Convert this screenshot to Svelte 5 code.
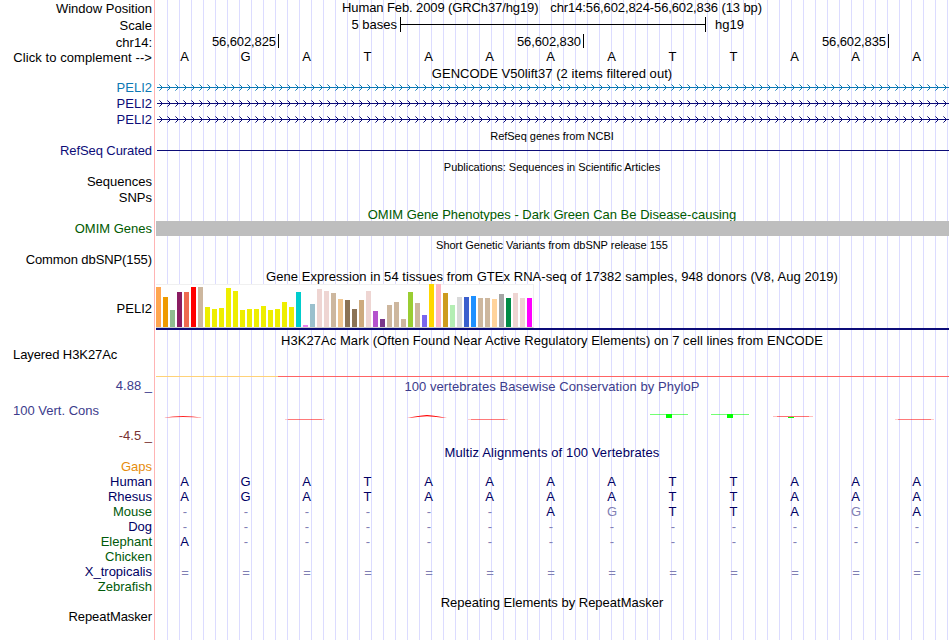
<script>
	const bases = "AGATAAAATTAAA".split("");
	const ticks = ["56,602,825", "56,602,830", "56,602,835"];

	// height is the distance to the next label
	const labels = [
		{ text: "Window Position", h: 17 },
		{ text: "Scale", h: 17 },
		{ text: "chr14:", h: 15 },
		{ text: "Click to complement -->", h: 30, kind: "loose" },
		{ text: "PELI2", h: 16, kind: "blue" },
		{ text: "PELI2", h: 16, kind: "gene" },
		{ text: "PELI2", h: 31, kind: "gene" },
		{ text: "RefSeq Curated", h: 31, kind: "gene tight" },
		{ text: "Sequences", h: 16 },
		{ text: "SNPs", h: 31 },
		{ text: "OMIM Genes", h: 31, kind: "omim" },
		{ text: "Common dbSNP(155)", h: 49, kind: "tight" },
		{ text: "PELI2", h: 46 },
		{ text: "Layered H3K27Ac", h: 31, kind: "left tight" },
		{ text: "4.88 _", h: 25, kind: "cons" },
		{ text: "100 Vert. Cons", h: 25, kind: "left cons" },
		{ text: "-4.5 _", h: 31, kind: "neg" },
		{ text: "Gaps", h: 15, kind: "gaps" },
		{ text: "Human", h: 15, kind: "navy" },
		{ text: "Rhesus", h: 15, kind: "navy" },
		{ text: "Mouse", h: 15, kind: "green" },
		{ text: "Dog", h: 15, kind: "navy" },
		{ text: "Elephant", h: 15, kind: "green" },
		{ text: "Chicken", h: 15, kind: "green" },
		{ text: "X_tropicalis", h: 15, kind: "navy" },
		{ text: "Zebrafish", h: 30, kind: "green" },
		{ text: "RepeatMasker", h: 15, kind: "tight" },
	];

	const alignment = [
		"             ",
		"AGATAAAATTAAA",
		"AGATAAAATTAAA",
		"------AGTTAGA",
		"-------------",
		"A------------",
		"             ",
		"=============",
		"             ",
	];

	const tissues = [
		["#ffa54f", 40], ["#ee9a00", 30], ["#8fbc8f", 17], ["#8b1c62", 35], ["#ee6a50", 35], ["#ff0000", 40],
		["#cdb79e", 40], ["#eeee00", 20], ["#eeee00", 18], ["#eeee00", 19], ["#eeee00", 39], ["#eeee00", 36],
		["#eeee00", 17], ["#eeee00", 18], ["#eeee00", 18], ["#eeee00", 21], ["#eeee00", 17], ["#eeee00", 18],
		["#eeee00", 25], ["#eeee00", 20], ["#00cdcd", 35], ["#ee82ee", 2], ["#9ac0cd", 23], ["#eed5d2", 38],
		["#eed5d2", 36], ["#cdb79e", 34], ["#eec591", 28], ["#8b7355", 27], ["#8b7355", 18], ["#cdaa7d", 27],
		["#eed5d2", 36], ["#b452cd", 16], ["#7a378b", 8], ["#cdb79e", 22], ["#cdb79e", 25], ["#cdb79e", 8],
		["#9acd32", 35], ["#cdb79e", 24], ["#7a67ee", 12], ["#ffd700", 43], ["#ffb6c1", 43], ["#cd9b1d", 34],
		["#b4eeb4", 22], ["#d9d9d9", 30], ["#3a5fcd", 30], ["#1e90ff", 31], ["#cdb79e", 29], ["#cdb79e", 29],
		["#ffd39b", 28], ["#a6a6a6", 33], ["#008b45", 29], ["#eed5d2", 34], ["#eed5d2", 29], ["#ff00ff", 29],
	];

	const genes = ["#0c78b4", "#0c0c78", "#0c0c78"];
	const arrows = Array.from({ length: 99 }, (_, i) => 4 + i * 8);

	const isFaint = (row, i) => row[i] === "-" || row[i] === "=" || (row[i] === "G" && bases[i] !== "G");
</script>

<main>
	<div class="labels">
		{#each labels as label}
			<div class="label {label.kind ?? ''}" style="height: {label.h}px">{label.text}</div>
		{/each}
	</div>

	<div class="tracks">
		<div class="title top"><span>Human Feb. 2009 (GRCh37/hg19)</span><span>chr14:56,602,824-56,602,836 (13 bp)</span></div>
		<div class="scale">
			<span class="size">5 bases</span>
			<span class="ruler"><i></i></span>
			<span>hg19</span>
		</div>
		<div class="positions">
			{#each ticks as tick}
				<span>{tick}</span>
			{/each}
		</div>
		<div class="bases">
			{#each bases as base}
				<span>{base}</span>
			{/each}
		</div>

		<div class="title gencode">GENCODE V50lift37 (2 items filtered out)</div>
		{#each genes as color}
			<svg class="gene" width="792" height="16" viewBox="0 0 792 16" shape-rendering="crispEdges" stroke={color} fill="none">
				<path d="M0 7.5H792" />
				{#each arrows as x}
					<path d="M{x - 1} 5.5h1M{x} 6.5h1M{x} 8.5h1M{x - 1} 9.5h1" />
					<path d="M{x - 2} 4.5h1M{x - 2} 10.5h1" opacity=".6" />
				{/each}
			</svg>
		{/each}

		<div class="title small refseq">RefSeq genes from NCBI</div>
		<div class="curated"></div>
		<div class="title small pubs">Publications: Sequences in Scientific Articles</div>
		<div class="title phenotypes">OMIM Gene Phenotypes - Dark Green Can Be Disease-causing</div>
		<div class="omim-bar"></div>
		<div class="title small dbsnp">Short Genetic Variants from dbSNP release 155</div>

		<div class="title gtex">Gene Expression in 54 tissues from GTEx RNA-seq of 17382 samples, 948 donors (V8, Aug 2019)</div>
		<div class="expression">
			<div class="bars">
				{#each tissues as [color, h]}
					<span style="height: {h}px; background: {color}"></span>
				{/each}
			</div>
		</div>

		<div class="title h3k">H3K27Ac Mark (Often Found Near Active Regulatory Elements) on 7 cell lines from ENCODE</div>
		<div class="signal"></div>
		<div class="title phylop">100 vertebrates Basewise Conservation by PhyloP</div>
		<svg class="wiggle" width="794" height="51" viewBox="155 394 794 51" fill="none">
			<g fill="#ff0000">
				<path d="M163 417.8Q183 414.2 203 417.8Q183 416.4 163 417.8" opacity=".85" />
				<path d="M407 417.9L412 416.9L420 415.8L427 415L434 415.8L442 416.9L447 417.9L441 417.6L434 416.8L427 416.2L420 416.8L413 417.6Z" />
			</g>
			<g stroke="#ff0000">
				<path d="M288 419.5h34M471 419.5h34M898 419.5h33" opacity=".4" />
				<path d="M285 419.5h40M468 419.5h40M895 419.5h39" opacity=".2" />
				<path d="M777 416.5h32" opacity=".4" />
				<path d="M773 416.5h40" opacity=".25" />
			</g>
			<g stroke="#00ff00">
				<path d="M650 414.5h38M711 414.5h38" opacity=".55" />
				<path d="M788 417.5h6" />
				<path d="M666 416h6M727 416h6" stroke-width="4" />
			</g>
		</svg>

		<div class="title multiz">Multiz Alignments of 100 Vertebrates</div>
		{#each alignment as row}
			<div class="bases align">
				{#each row.split("") as base, i}
					<span class:faint={isFaint(row, i)} class:equals={base === "="}>{base}</span>
				{/each}
			</div>
		{/each}
		<div class="title repeats">Repeating Elements by RepeatMasker</div>
	</div>
</main>

<style>
	:global(body) {
		background: #fff;
	}

	main {
		display: flex;
		width: 950px;
		height: 640px;
		overflow: hidden;
		font: 13px/15px "Liberation Sans", Arial, sans-serif;
		color: #000;
		white-space: pre;
	}

	.labels {
		box-sizing: border-box;
		width: 154px;
		padding: 1px 2px 0 13px;
		text-align: right;
	}

	.label.left { text-align: left; }
	.loose { letter-spacing: 0.08px; }
	.tight { letter-spacing: -0.09px; }
	.blue { color: #0c78b4; }
	.gene { color: #0c0c78; }
	.omim { color: #005a00; }
	.cons { color: #3c3c8c; }
	.neg { color: #783232; }
	.gaps { color: #e68c0c; }
	.navy { color: #000064; }
	.green { color: #005a0a; }

	.tracks {
		display: flex;
		flex-direction: column;
		width: 794px;
		border-left: 1px solid #ffb4b4;
		background:
			linear-gradient(#fff, #fff) 0 0 / 1px 100% no-repeat,
			linear-gradient(to right, #dcdcff 1px, transparent 1px) 0 0 / 12px 100%;
	}

	.tracks > * {
		flex: none;
	}

	.title {
		letter-spacing: 0.05px;
		text-align: center;
	}

	.small {
		font-size: 11px;
		letter-spacing: -0.03px;
	}

	.top {
		display: flex;
		justify-content: center;
		gap: 12px;
		height: 17px;
		letter-spacing: -0.11px;
	}

	.scale {
		display: flex;
		height: 17px;
	}

	.size {
		width: 242px;
		margin-right: 3px;
		text-align: right;
	}

	.ruler {
		display: flex;
		align-items: center;
		box-sizing: border-box;
		width: 306px;
		height: 15px;
		margin-right: 9px;
		border: solid #000;
		border-width: 0 1px;
	}

	.ruler i {
		flex: 1;
		height: 1px;
		background: #000;
	}

	.positions {
		display: flex;
		height: 15px;
		letter-spacing: -0.1px;
	}

	.positions span {
		box-sizing: border-box;
		width: 305px;
		height: 14px;
		padding-right: 2px;
		border-right: 1px solid #000;
		text-align: right;
	}

	.positions span:first-child { width: 124px; }

	.bases {
		display: grid;
		grid-template-columns: repeat(13, 61px);
		height: 17px;
		margin-left: -1px;
		text-align: center;
	}

	.align {
		height: 15px;
		color: #000064;
	}

	.faint {
		padding-left: 1px;
		color: #8080b4;
	}

	.equals { padding-top: 1px; }

	.gencode { height: 14px; }

	svg.gene {
		display: block;
		margin-left: 2px;
	}

	.refseq {
		height: 14px;
		margin-top: 1px;
	}

	.curated {
		height: 1px;
		margin: 7px 0 9px 2px;
		background: #0c0c78;
	}

	.pubs { height: 47px; }

	.phenotypes {
		height: 14px;
		color: #005a00;
		letter-spacing: 0;
	}

	.omim-bar {
		z-index: 1;
		height: 15px;
		margin-left: 1px;
		background: #bebebe;
	}

	.dbsnp {
		height: 31px;
		margin-top: 2px;
	}

	.gtex { height: 15px; }

	.expression {
		margin-left: 1px;
		border-bottom: 2px solid #0c0c78;
	}

	.bars {
		display: flex;
		align-items: flex-end;
		gap: 2px;
		box-sizing: border-box;
		width: 378px;
		height: 44px;
		border-right: 1px solid #f0f0f0;
		border-bottom: 1px solid #ccc;
		background: linear-gradient(#f0f0f0, #f0f0f0) 0 0 / 100% 1px no-repeat #fff;
	}

	.bars span { width: 5px; }

	.h3k {
		height: 43px;
		margin-top: 3px;
	}

	.signal {
		height: 1px;
		margin: 0 0 2px 1px;
		background: linear-gradient(to right, #ffd278 122px, #ff6464 122px);
	}

	.phylop {
		height: 15px;
		color: #3c3c8c;
		letter-spacing: 0.07px;
	}

	.wiggle { display: block; }

	.multiz {
		height: 14px;
		color: #000064;
		letter-spacing: 0.11px;
	}

	.repeats {
		margin-top: 1px;
		letter-spacing: 0;
	}
</style>
